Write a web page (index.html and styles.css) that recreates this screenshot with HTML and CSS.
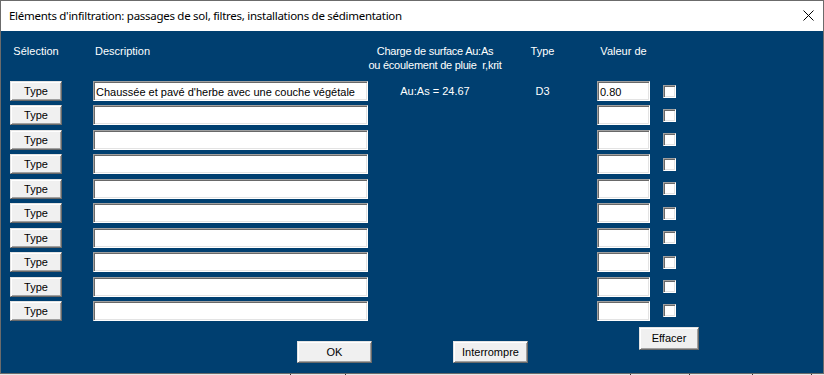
FILE: index.html
```html
<!DOCTYPE html>
<html lang="fr">
<head>
<meta charset="UTF-8">
<title>Eléments d'infiltration</title>
<link rel="stylesheet" href="styles.css">
</head>
<body>
<div class="window">
	<div class="titlebar">
		<span class="title">Eléments d'infiltration: passages de sol, filtres, installations de sédimentation</span>
		<svg class="close" width="11" height="11" viewBox="0 0 11 11"><path d="M0.5 0.5L10.5 10.5M10.5 0.5L0.5 10.5" stroke="#000" stroke-width="1"/></svg>
	</div>
	<div class="content">
		<div class="head">
			<div class="h-sel">Sélection</div>
			<div class="h-desc">Description</div>
			<div class="h-charge">Charge de surface Au:As<br>ou écoulement de pluie &nbsp;r,krit</div>
			<div class="h-type">Type</div>
			<div class="h-val">Valeur de</div>
		</div>
		<div class="rows">
			<div class="row">
				<button class="btn sel">Type</button>
				<div class="field desc">Chaussée et pavé d'herbe avec une couche végétale</div>
				<div class="charge">Au:As = 24.67</div>
				<div class="typ">D3</div>
				<div class="field val">0.80</div>
				<div class="chk"></div>
			</div>
			<div class="row"><button class="btn sel">Type</button><div class="field desc"></div><div class="charge"></div><div class="typ"></div><div class="field val"></div><div class="chk"></div></div>
			<div class="row"><button class="btn sel">Type</button><div class="field desc"></div><div class="charge"></div><div class="typ"></div><div class="field val"></div><div class="chk"></div></div>
			<div class="row"><button class="btn sel">Type</button><div class="field desc"></div><div class="charge"></div><div class="typ"></div><div class="field val"></div><div class="chk"></div></div>
			<div class="row"><button class="btn sel">Type</button><div class="field desc"></div><div class="charge"></div><div class="typ"></div><div class="field val"></div><div class="chk"></div></div>
			<div class="row"><button class="btn sel">Type</button><div class="field desc"></div><div class="charge"></div><div class="typ"></div><div class="field val"></div><div class="chk"></div></div>
			<div class="row"><button class="btn sel">Type</button><div class="field desc"></div><div class="charge"></div><div class="typ"></div><div class="field val"></div><div class="chk"></div></div>
			<div class="row"><button class="btn sel">Type</button><div class="field desc"></div><div class="charge"></div><div class="typ"></div><div class="field val"></div><div class="chk"></div></div>
			<div class="row"><button class="btn sel">Type</button><div class="field desc"></div><div class="charge"></div><div class="typ"></div><div class="field val"></div><div class="chk"></div></div>
			<div class="row"><button class="btn sel">Type</button><div class="field desc"></div><div class="charge"></div><div class="typ"></div><div class="field val"></div><div class="chk"></div></div>
		</div>
		<div class="bottom">
			<button class="btn ok">OK</button>
			<button class="btn stop">Interrompre</button>
			<button class="btn clear">Effacer</button>
		</div>
	</div>
</div>
<div class="desk">
	<span class="tick t1"></span><span class="tick t2"></span><span class="tick t3"></span><span class="tick t4"></span><span class="tick t5"></span><span class="tick t6"></span>
</div>
</body>
</html>
```
FILE: styles.css
```css
* { padding: 0; margin: 0; box-sizing: border-box; }
html, body { width: 824px; height: 375px; overflow: hidden; background: #fff; }
body { font-family: "Liberation Sans", Arial, sans-serif; font-size: 11px; color: #000; }

.window { width: 824px; height: 374px; border: 1px solid #6b6b6b; display: flex; flex-direction: column; }
.titlebar { height: 30px; background: #fff; display: flex; align-items: center; justify-content: space-between; padding: 0 9px 0 8px; }
.title { font-family: "Noto Sans", "Open Sans", sans-serif; font-size: 11.5px; letter-spacing: -0.28px; color: #000; padding-bottom: 1px; }
.close { display: block; margin-bottom: 1px; }

.content { flex: 1; background: #003f70; color: #fff; padding: 13px 0 0 9px; }

.head { display: flex; height: 28px; line-height: 14px; }
.h-sel { width: 52px; text-align: center; }
.h-desc { width: 275px; margin-left: 31px; padding-left: 2px; }
.h-charge { width: 134px; text-align: center; white-space: nowrap; letter-spacing: -0.25px; }
.h-type { width: 81px; text-align: center; }
.h-val { width: 53px; margin-left: 14px; text-align: center; }

.rows { margin-top: 9px; display: flex; flex-direction: column; gap: 4.44px; }
.row { display: flex; align-items: center; height: 20px; }

.btn { font-family: "Liberation Sans", Arial, sans-serif; font-size: 11px; color: #000; background: #f0f0f0; border: 1px solid; border-color: #e3e3e3 #696969 #696969 #e3e3e3; box-shadow: inset 1px 1px #fff, inset -1px -1px #a0a0a0; cursor: pointer; }
.sel { width: 52px; height: 20px; }

.field { height: 20px; background: #fff; color: #000; border: 1px solid; border-color: #a0a0a0 #fff #fff #a0a0a0; box-shadow: inset 1px 1px #696969, inset -1px -1px #e3e3e3; padding: 3px 0 0 2px; line-height: 14px; white-space: nowrap; overflow: hidden; }
.desc { width: 275px; margin-left: 31px; }
.charge { width: 134px; text-align: center; }
.typ { width: 81px; text-align: center; }
.val { width: 53px; margin-left: 14px; }
.chk { width: 13px; height: 13px; margin-left: 13px; background: #fff; border: 1px solid; border-color: #a0a0a0 #fff #fff #a0a0a0; box-shadow: inset 1px 1px #696969, inset -1px -1px #e3e3e3; }

.bottom { margin-top: 6px; display: flex; align-items: flex-start; }
.ok { width: 75px; height: 22px; margin: 14px 0 0 287px; }
.stop { width: 75px; height: 22px; margin: 14px 0 0 81px; }
.clear { width: 60px; height: 23px; margin-left: 111px; }

.desk { height: 1px; background: #e8e8e8; display: flex; }
.tick { width: 1px; height: 1px; background: #333; }
.t1 { margin-left: 290px; }
.t2 { margin-left: 54px; }
.t3 { margin-left: 284px; }
.t4 { margin-left: 58px; }
.t5 { margin-left: 62px; }
.t6 { margin-left: 58px; }
```
